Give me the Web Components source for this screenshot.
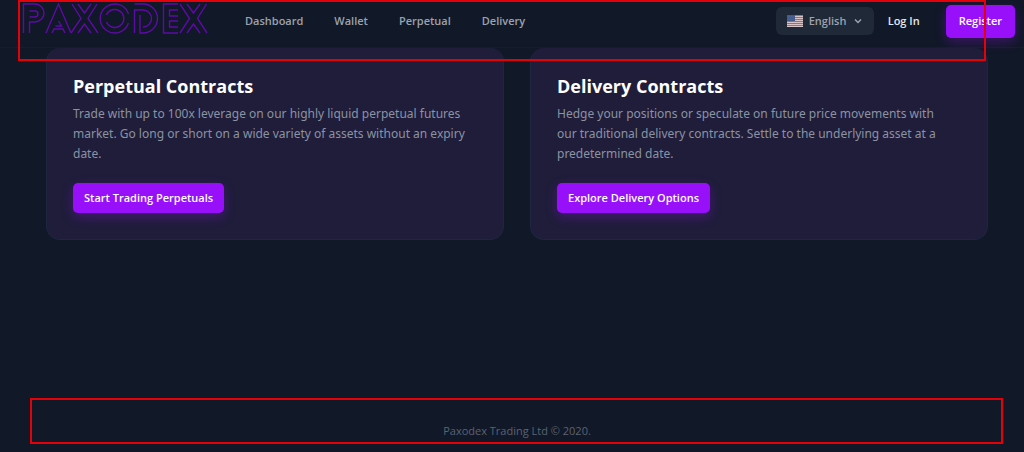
<!DOCTYPE html>
<html lang="en">
<head>
<meta charset="utf-8">
<meta name="viewport" content="width=device-width, initial-scale=1">
<title>Paxodex</title>
<style>
  body {
    margin: 0;
    background: #111827;
    font-family: "Segoe UI", "Noto Sans", "Open Sans", sans-serif;
  }
</style>
</head>
<body>
<paxodex-app></paxodex-app>

<script>
class PaxodexLogo extends HTMLElement {
  constructor() {
    super();
    this.attachShadow({ mode: "open" });
  }

  connectedCallback() {
    this.shadowRoot.innerHTML = `
      <style>
        :host { display: block; }
        svg { display: block; width: 186px; height: 40px; fill: none; stroke: #5f0aa8; stroke-width: 1.4; }
      </style>
      <svg viewBox="0 0 186 40" role="img" aria-label="Paxodex">
        <!-- P -->
        <path d="M1.500 33V4H13a9 9 0 0 1 0 18H7.500V33M7.500 17H13a3 3 0 0 0 0-6H7.500"/>
        <!-- A -->
        <path d="M24 33 36.500 4 49 33M30 33l2-4h9l2 4M36.500 21l3 5h-6"/>
        <!-- X -->
        <path d="M50 4l9 14.500L49 33M56 4l6.500 9L69 4M75 4l-9 14.500L76 33M56 33l6.500-9L69 33"/>
        <!-- O -->
        <path d="M106.500 14a14.500 14.500 0 1 0 0 9M84.500 15a9 9 0 1 1 0 7"/>
        <!-- D -->
        <path d="M112.500 4H121a14.500 14.500 0 0 1 0 29h-3V15M112.500 33V10H121a8.500 8.500 0 0 1 0 17"/>
        <!-- E -->
        <path d="M156 4h-14.500V33H156M156 10h-8.500v6H156M156 21h-8.500v6H156"/>
        <!-- X -->
        <path d="M158 4l9.500 14.500L158 33M165 4l6.500 9L178 4M184.500 4l-9 14.500 9.500 14.500M165 33l6.500-9L178 33"/>
      </svg>
    `;
  }
}

class UsFlag extends HTMLElement {
  constructor() {
    super();
    this.attachShadow({ mode: "open" });
  }

  connectedCallback() {
    this.shadowRoot.innerHTML = `
      <style>
        :host { display: block; }
        svg { display: block; width: 16px; height: 12px; }
      </style>
      <svg viewBox="0 0 16 12" aria-hidden="true">
        <path fill="#d9c4c8" d="M0 0h16v12H0z"/>
        <path stroke="#cf5a62" d="M0 .5h16M0 2.500h16M0 4.500h16M0 6.500h16M0 8.500h16M0 10.500h16"/>
        <path fill="#41598b" d="M0 0h8v6H0z"/>
        <path stroke="#6f83ab" stroke-width=".5" stroke-dasharray=".7 1" d="M.7 1.500h7M1.500 3h6M.7 4.500h7"/>
      </svg>
    `;
  }
}

class LanguagePicker extends HTMLElement {
  constructor() {
    super();
    this.attachShadow({ mode: "open" });
  }

  connectedCallback() {
    this.shadowRoot.innerHTML = `
      <style>
        :host { display: block; }
        label {
          display: flex;
          align-items: center;
          gap: 6px;
          height: 28px;
          padding: 0 11px;
          border-radius: 6px;
          background: #1f2937;
          color: #9ca3af;
        }
        select {
          appearance: none;
          margin: 0;
          padding: 0;
          border: 0;
          background: none;
          color: inherit;
          font: 600 11px/16px "Segoe UI", "Open Sans", "Noto Sans", sans-serif;
        }
        .chevron { width: 10px; height: 10px; fill: none; stroke: currentColor; stroke-width: 1.5; }
      </style>
      <label>
        <us-flag></us-flag>
        <select aria-label="Language"><option>English</option></select>
        <svg class="chevron" viewBox="0 0 10 10" aria-hidden="true"><path d="M2 3.500l3 3 3-3"/></svg>
      </label>
    `;
  }
}

class PrimaryButton extends HTMLElement {
  constructor() {
    super();
    this.attachShadow({ mode: "open" });
  }

  connectedCallback() {
    this.shadowRoot.innerHTML = `
      <style>
        :host { display: inline-block; vertical-align: top; }
        button {
          display: block;
          height: var(--button-height, 30px);
          padding: 0 var(--button-padding, 11px);
          border: 0;
          border-radius: 5px;
          background: #9810fa;
          box-shadow: 0 4px 12px rgba(152, 16, 250, 0.3);
          color: #fff;
          font: 600 11px/16px "Segoe UI", "Open Sans", "Noto Sans", sans-serif;
          cursor: pointer;
        }
      </style>
      <button type="button"><slot></slot></button>
    `;
  }
}

class SiteHeader extends HTMLElement {
  constructor() {
    super();
    this.attachShadow({ mode: "open" });

    this.links = ["Dashboard", "Wallet", "Perpetual", "Delivery"];
  }

  connectedCallback() {
    this.shadowRoot.innerHTML = `
      <style>
        :host { display: block; }
        header {
          display: flex;
          align-items: center;
          box-sizing: border-box;
          height: 48px;
          padding: 0 9px 5px 22px;
          border-bottom: 1px solid #1a1b33;
          font: 600 11px/16px "Segoe UI", "Open Sans", "Noto Sans", sans-serif;
        }
        paxodex-logo { align-self: flex-start; }
        nav { display: flex; gap: 31px; margin-left: 37px; }
        a { color: #9ca3af; text-decoration: none; }
        .actions { display: flex; align-items: center; margin-left: auto; }
        .login { margin: 0 26px 0 14px; color: #e5e7eb; }
        primary-button { --button-height: 33px; --button-padding: 13px; }
      </style>
      <header>
        <paxodex-logo></paxodex-logo>
        <nav>
          ${this.links.map(link => `<a href="#">${link}</a>`).join("")}
        </nav>
        <div class="actions">
          <language-picker></language-picker>
          <a class="login" href="#">Log In</a>
          <primary-button>Register</primary-button>
        </div>
      </header>
    `;
  }
}

class ContractCard extends HTMLElement {
  constructor() {
    super();
    this.attachShadow({ mode: "open" });
  }

  connectedCallback() {
    this.shadowRoot.innerHTML = `
      <style>
        :host {
          display: block;
          padding: 24px 26px 26px;
          border: 1px solid #1f2640;
          border-top: 0;
          border-radius: 14px;
          background: #1f1d3a;
        }
        h2 { margin: 0 0 4px; color: #fff; font: 700 18px/28px "Segoe UI", "Open Sans", "Noto Sans", sans-serif; }
        p { margin: 0 0 19px; padding-right: 8px; color: #8b93a3; font-size: 12px; line-height: 20px; }
      </style>
      <h2><slot name="title"></slot></h2>
      <p><slot></slot></p>
      <slot name="action"></slot>
    `;
  }
}

class SiteFooter extends HTMLElement {
  constructor() {
    super();
    this.attachShadow({ mode: "open" });
  }

  connectedCallback() {
    this.shadowRoot.innerHTML = `
      <style>
        :host {
          display: block;
          padding: 12px 36px 13px 46px;
          color: #5b6372;
          font: 11px/16px "Segoe UI", "Open Sans", "Noto Sans", sans-serif;
          text-align: center;
        }
      </style>
      <footer><slot></slot></footer>
    `;
  }
}

// Red outline laid over an area of the page
class HighlightBox extends HTMLElement {
  constructor() {
    super();
    this.attachShadow({ mode: "open" });
  }

  connectedCallback() {
    this.shadowRoot.innerHTML = `
      <style>
        :host { position: absolute; z-index: 2; box-sizing: border-box; border: 2px solid #e6000a; pointer-events: none; }
      </style>
    `;
  }
}

class PaxodexApp extends HTMLElement {
  constructor() {
    super();
    this.attachShadow({ mode: "open" });
  }

  connectedCallback() {
    this.shadowRoot.innerHTML = `
      <style>
        :host { display: flex; flex-direction: column; position: relative; box-sizing: border-box; min-height: 100vh; }
        main {
          display: grid;
          grid-template-columns: 1fr 1fr;
          gap: 26px;
          align-items: start;
          padding: 0 36px 0 46px;
        }
        site-footer { margin-top: auto; }
        .mark-header { top: 0; left: 18px; right: 38px; height: 61px; }
        .mark-footer { bottom: 8px; left: 30px; right: 21px; height: 46px; }
      </style>
      <site-header></site-header>
      <main>
        <contract-card>
          <span slot="title">Perpetual Contracts</span>
          Trade with up to 100x leverage on our highly liquid perpetual futures market. Go long or short on a wide variety of assets without an expiry date.
          <primary-button slot="action">Start Trading Perpetuals</primary-button>
        </contract-card>
        <contract-card>
          <span slot="title">Delivery Contracts</span>
          Hedge your positions or speculate on future price movements with our traditional delivery contracts. Settle to the underlying asset at a predetermined date.
          <primary-button slot="action">Explore Delivery Options</primary-button>
        </contract-card>
      </main>
      <site-footer>Paxodex Trading Ltd © 2020.</site-footer>
      <highlight-box class="mark-header"></highlight-box>
      <highlight-box class="mark-footer"></highlight-box>
    `;
  }
}

customElements.define("paxodex-logo", PaxodexLogo);
customElements.define("us-flag", UsFlag);
customElements.define("language-picker", LanguagePicker);
customElements.define("primary-button", PrimaryButton);
customElements.define("site-header", SiteHeader);
customElements.define("contract-card", ContractCard);
customElements.define("site-footer", SiteFooter);
customElements.define("highlight-box", HighlightBox);
customElements.define("paxodex-app", PaxodexApp);
</script>
</body>
</html>
